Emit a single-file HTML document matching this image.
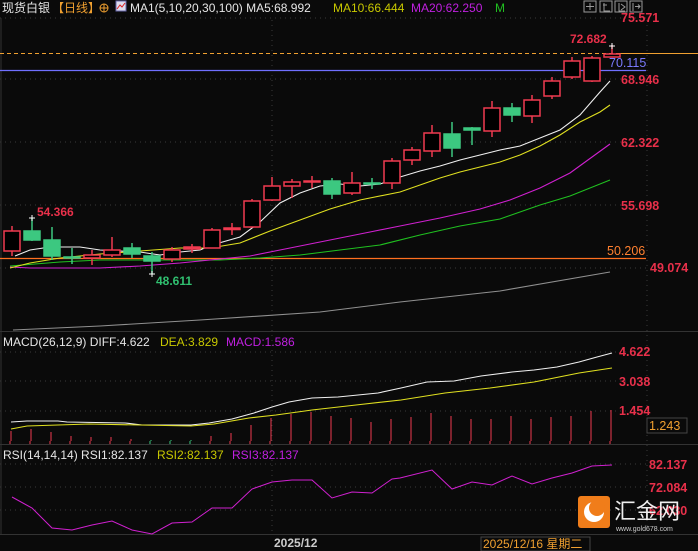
<!DOCTYPE html>
<html><head><meta charset="utf-8"><style>
html,body{margin:0;padding:0;background:#0a0a0a;width:698px;height:551px;overflow:hidden}
svg{display:block}
text{font-family:"Liberation Sans","Noto Sans CJK SC",sans-serif}
</style></head><body>
<svg width="698" height="551" viewBox="0 0 698 551" xmlns="http://www.w3.org/2000/svg">
<rect width="698" height="551" fill="#0a0a0a"/>
<text x="2" y="12" font-size="12" fill="#e6e6e6">现货白银</text>
<text x="52" y="12" font-size="12" fill="#f0a030">【日线】</text>
<circle cx="104" cy="8" r="4" fill="none" stroke="#f0a030" stroke-width="1"/><line x1="100" y1="8" x2="108" y2="8" stroke="#f0a030"/><line x1="104" y1="4" x2="104" y2="12" stroke="#f0a030"/>
<rect x="116" y="1" width="10" height="10" fill="#dde" stroke="#66a"/><polyline points="117,9 120,5 122,7 125,3" fill="none" stroke="#d22" stroke-width="1"/>
<text x="130" y="12" font-size="12" fill="#e6e6e6">MA1(5,10,20,30,100) MA5:68.992</text>
<text x="333" y="12" font-size="12" fill="#c8c800">MA10:66.444</text>
<text x="411" y="12" font-size="12" fill="#c020e0">MA20:62.250</text>
<text x="495" y="12" font-size="12" fill="#20c020">M</text>
<g fill="none" stroke="#999" stroke-width="1">
<rect x="584" y="1" width="12" height="11"/><rect x="600" y="1" width="12" height="11"/><rect x="615" y="1" width="12" height="11"/><rect x="630" y="1" width="12" height="11"/>
<path d="M590 3v7M586 6.5h8M604 3v8h6M603 5h4M619 3v8h6M621 4l4 3-4 3M633 3v8M635 6.5h5M638 4.5l2 2-2 2"/>
</g>
<g stroke="#3a3a3a" stroke-dasharray="1,4">
<line x1="0" y1="18" x2="646" y2="18"/><line x1="0" y1="79" x2="646" y2="79"/><line x1="0" y1="142" x2="646" y2="142"/><line x1="0" y1="205" x2="646" y2="205"/><line x1="0" y1="268" x2="646" y2="268"/>
<line x1="272" y1="20" x2="272" y2="535"/><line x1="647" y1="20" x2="647" y2="535"/>
<line x1="0" y1="352" x2="646" y2="352"/><line x1="0" y1="381" x2="646" y2="381"/><line x1="0" y1="411" x2="646" y2="411"/>
<line x1="0" y1="464" x2="646" y2="464"/><line x1="0" y1="487" x2="646" y2="487"/><line x1="0" y1="510" x2="646" y2="510"/>
</g>
<line x1="1" y1="18" x2="1" y2="535" stroke="#333"/>
<line x1="0" y1="331.5" x2="698" y2="331.5" stroke="#333"/>
<line x1="0" y1="444.5" x2="698" y2="444.5" stroke="#333"/>
<line x1="0" y1="534.5" x2="698" y2="534.5" stroke="#333"/>
<g font-size="12.5" fill="#e8304a" font-weight="bold">
<text x="621" y="22">75.571</text><text x="621" y="84">68.946</text><text x="621" y="147">62.322</text><text x="621" y="210">55.698</text><text x="650" y="272">49.074</text>
<text x="619" y="356">4.622</text><text x="619" y="386">3.038</text><text x="619" y="415">1.454</text>
<text x="649" y="469">82.137</text><text x="649" y="492">72.084</text><text x="649" y="515">62.030</text>
</g>
<line x1="0" y1="53.5" x2="620" y2="53.5" stroke="#f0a030" stroke-dasharray="4,3"/><line x1="620" y1="53.5" x2="698" y2="53.5" stroke="#f0a030"/>
<line x1="0" y1="70.5" x2="646" y2="70.5" stroke="#7070ff" stroke-width="1.2"/>
<text x="609" y="67" font-size="12.5" fill="#7a7aff">70.115</text>
<text x="570" y="43" font-size="12" font-weight="bold" fill="#e8304a">72.682</text>
<line x1="0" y1="258.5" x2="646" y2="258.5" stroke="#ff7020" stroke-width="1.2"/>
<text x="607" y="255" font-size="12.5" fill="#ff8030">50.206</text>
<g fill="none" stroke-width="1.1">
<polyline stroke="#909090" points="13,330 100,326 200,320 320,312 400,302 500,291 610,272"/>
<polyline stroke="#20c020" points="10,266 60,262 100,260 160,260 220,260 260,258 300,255 340,250 380,245 420,235 460,226 500,219 540,205 570,196 610,180"/>
<polyline stroke="#d020d0" points="10,267 30,268 60,268 100,268 140,266 180,263 220,259 250,256 280,250 310,244 340,238 370,232 400,226 440,218 480,209 510,200 540,188 570,173 610,144"/>
<polyline stroke="#e0e020" points="10,268 30,263 60,258 100,254 140,251 180,248 210,248 240,243 270,231 300,220 330,209 360,200 400,192 420,185 440,178 460,172 480,167 500,162 520,155 540,146 560,135 580,122 600,112 610,105"/>
<polyline stroke="#f0f0f0" points="15,256 30,250 50,247 80,247 100,250 140,252 160,255 180,252 200,250 212,245 240,237 260,222 280,203 300,193 320,186 340,184 360,186 380,184 400,177 420,171 440,166 460,160 480,155 500,150 520,146 540,138 560,130 580,115 600,92 610,81"/>
</g>
<g stroke-width="1.5">
<g stroke="#f03a50" fill="#000">
<line x1="12" y1="226" x2="12" y2="256"/><rect x="4" y="231" width="16" height="20"/>
<line x1="92" y1="250" x2="92" y2="265"/><rect x="84" y="255" width="16" height="3"/>
<line x1="112" y1="237" x2="112" y2="257"/><rect x="104" y="250" width="16" height="5"/>
<line x1="172" y1="247" x2="172" y2="262"/><rect x="164" y="250" width="16" height="9"/>
<line x1="192" y1="244" x2="192" y2="253"/><rect x="184" y="247" width="16" height="2" fill="#f03a50"/>
<line x1="212" y1="228" x2="212" y2="248"/><rect x="204" y="230" width="16" height="18"/>
<line x1="232" y1="223" x2="232" y2="235"/><rect x="224" y="228" width="16" height="1.5" fill="#f03a50"/>
<line x1="252" y1="199" x2="252" y2="227"/><rect x="244" y="201" width="16" height="26"/>
<line x1="272" y1="177" x2="272" y2="201"/><rect x="264" y="186" width="16" height="14"/>
<line x1="292" y1="179" x2="292" y2="198"/><rect x="284" y="182" width="16" height="4"/>
<line x1="312" y1="176" x2="312" y2="188"/><rect x="304" y="181" width="16" height="1" fill="#f03a50"/>
<line x1="352" y1="172" x2="352" y2="195"/><rect x="344" y="183" width="16" height="10"/>
<line x1="392" y1="158" x2="392" y2="189"/><rect x="384" y="161" width="16" height="22"/>
<line x1="412" y1="147" x2="412" y2="165"/><rect x="404" y="150" width="16" height="10"/>
<line x1="432" y1="125" x2="432" y2="157"/><rect x="424" y="133" width="16" height="18"/>
<line x1="492" y1="101" x2="492" y2="137"/><rect x="484" y="108" width="16" height="23"/>
<line x1="532" y1="95" x2="532" y2="123"/><rect x="524" y="100" width="16" height="16"/>
<line x1="552" y1="77" x2="552" y2="99"/><rect x="544" y="81" width="16" height="15"/>
<line x1="572" y1="57" x2="572" y2="79"/><rect x="564" y="61" width="16" height="16"/>
<line x1="592" y1="56" x2="592" y2="82"/><rect x="584" y="58" width="16" height="23"/>
<line x1="612" y1="45" x2="612" y2="54"/><rect x="604" y="54" width="16" height="3"/>
</g>
<g stroke="#3cc880" fill="#3cc880">
<line x1="32" y1="218" x2="32" y2="241"/><rect x="24" y="231" width="16" height="9"/>
<line x1="52" y1="227" x2="52" y2="260"/><rect x="44" y="240" width="16" height="16"/>
<line x1="72" y1="248" x2="72" y2="264"/><rect x="64" y="257" width="16" height="1"/>
<line x1="132" y1="243" x2="132" y2="258"/><rect x="124" y="248" width="16" height="6"/>
<line x1="152" y1="252" x2="152" y2="274"/><rect x="144" y="256" width="16" height="5"/>
<line x1="332" y1="178" x2="332" y2="199"/><rect x="324" y="181" width="16" height="13"/>
<line x1="372" y1="178" x2="372" y2="189"/><rect x="364" y="183" width="16" height="1"/>
<line x1="452" y1="122" x2="452" y2="157"/><rect x="444" y="134" width="16" height="14"/>
<line x1="472" y1="127" x2="472" y2="145"/><rect x="464" y="128" width="16" height="2"/>
<line x1="512" y1="103" x2="512" y2="122"/><rect x="504" y="108" width="16" height="7"/>
</g>
<g stroke="#fff" stroke-width="1"><path d="M29 218h6M32 215v6M149 274h6M152 271v6M609 46h6M612 43v6"/></g>
</g>
<text x="37" y="216" font-size="12" font-weight="bold" fill="#e8304a">54.366</text>
<text x="156" y="285" font-size="12" font-weight="bold" fill="#30c070">48.611</text>
<text x="3" y="346" font-size="12" fill="#e6e6e6">MACD(26,12,9) DIFF:4.622</text>
<text x="160" y="346" font-size="12" fill="#c8c800">DEA:3.829</text>
<text x="226" y="346" font-size="12" fill="#c020e0">MACD:1.586</text>
<g stroke="#f03a50" stroke-width="1">
<path d="M11 441V431M31 441V429M51 441V432M71 441V436M91 441V437M111 441V437M131 441V439M211 441V436M231 441V433M251 441V425M271 441V418M291 441V414M311 441V412M331 441V416M351 441V418M371 441V422M391 441V419M411 441V417M431 441V413M451 441V416M471 441V419M491 441V419M511 441V416M531 441V419M551 441V417M571 441V416M591 441V411M611 441V410"/>
</g>
<path d="M151 441V440M171 441V440M191 441V440" stroke="#3cc880"/>
<polyline fill="none" stroke="#f0f0f0" stroke-width="1.1" points="11,422 27,421 58,421 67,422 125,423 142,425 191,425 209,423 232,419 254,413 272,407 289,402 312,398 338,397 378,393 401,388 427,382 454,381 481,376 512,372 534,370 557,367 579,362 597,357 612,353"/>
<polyline fill="none" stroke="#e0e020" stroke-width="1.1" points="11,429 27,426 89,424 191,426 214,424 249,418 276,415 312,410 356,405 401,400 445,393 490,388 534,382 579,373 612,368"/>
<rect x="647" y="418" width="40" height="15" fill="#0a0a0a" stroke="#444"/>
<text x="649" y="430" font-size="12.5" fill="#f0a030">1.243</text>
<g stroke="#f03a50"><path d="M10 441v3M30 441v3M50 441v3M70 441v3M90 441v3M110 441v3M130 441v3M210 441v3M230 441v3M250 441v3M270 441v3M290 441v3M310 441v3M330 441v3M350 441v3M370 441v3M390 441v3M410 441v3M430 441v3M450 441v3M470 441v3M490 441v3M510 441v3M530 441v3M550 441v3M570 441v3M590 441v3M610 441v3"/></g>
<path d="M150 441v3M170 441v3M190 441v3" stroke="#3cc880"/>
<text x="3" y="459" font-size="12" fill="#e6e6e6">RSI(14,14,14) RSI1:82.137</text>
<text x="157" y="459" font-size="12" fill="#c8c800">RSI2:82.137</text>
<text x="232" y="459" font-size="12" fill="#c020e0">RSI3:82.137</text>
<polyline fill="none" stroke="#d020d0" stroke-width="1" points="12,497 32,508 52,528 72,530 92,525 112,521 132,530 152,534 172,523 192,522 212,508 232,508 252,489 272,482 292,480 312,480 332,498 352,492 372,493 392,479 400,478 432,470 452,489 472,482 492,485 512,476 532,484 552,478 572,473 592,466 612,465"/>
<rect x="578" y="496" width="32" height="32" rx="3" fill="#f07d1a"/>
<circle cx="594" cy="512" r="10" fill="#fff"/>
<circle cx="597" cy="508" r="8" fill="#f07d1a"/>
<text x="614" y="519" font-size="22" fill="#eeeeee" font-family="Noto Sans CJK SC,sans-serif">汇金网</text>
<text x="616" y="531" font-size="7" fill="#cccccc">www.gold678.com</text>
<text x="274" y="547" font-size="12" font-weight="bold" fill="#cccccc">2025/12</text>
<rect x="481" y="537" width="109" height="14" fill="#0a0a0a" stroke="#444"/>
<text x="483" y="548" font-size="12" fill="#f0a030">2025/12/16 星期二</text>
</svg>
</body></html>
